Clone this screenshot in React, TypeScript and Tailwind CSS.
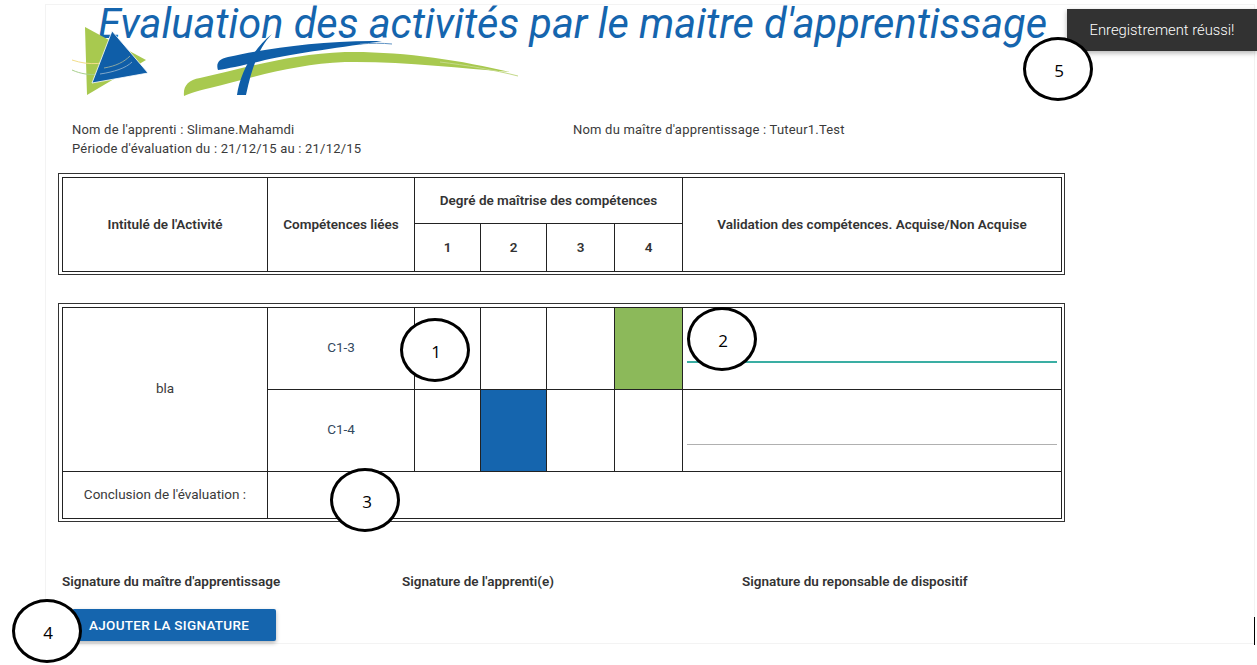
import React from "react";

const Bubble: React.FC<{ n: number; className: string }> = ({ n, className }) => (
  <div
    className={
      "absolute w-[70px] h-[64px] pt-[4px] pl-[2px] rounded-[50%] border-[3px] border-black bg-white flex items-center justify-center text-[17px] text-black font-['Open_Sans',sans-serif] " +
      className
    }
  >
    {n}
  </div>
);

const Logo = () => (
  <svg width="460" height="80" viewBox="0 0 460 80" className="block">
    {/* triangles */}
    <polygon points="25,7 86,40 27,75" fill="#a8c94f" />
    <path d="M12 40 C30 46 45 44 60 38" stroke="#f2de8a" strokeWidth="1" fill="none" />
    <path d="M12 50 C30 58 45 54 62 48" stroke="#a8d08d" strokeWidth="1" fill="none" />
    <polygon points="52,11 88,53 32,63" fill="#0f5ea8" stroke="#ffffff" strokeWidth="0.8" />
    <path d="M44 48 C56 46 64 42 70 36" stroke="#8aa6a0" strokeWidth="1" fill="none" />
    <path d="M40 54 C54 52 66 48 72 42" stroke="#7fa7c9" strokeWidth="1" fill="none" />
    {/* green brush stroke */}
    <path
      d="M124 76 C123 66 128 60 140 58 C185 48 230 34 285 32 C340 31 400 40 450 52 C400 48 340 41 285 42 C235 44 190 58 150 68 C138 71 130 73 124 76 Z"
      fill="#a8c94f"
    />
    <path d="M380 42 C405 45 435 50 458 56" stroke="#c4d98a" strokeWidth="1" fill="none" />
    {/* blue brush strokes */}
    <path
      d="M158 50 C156 44 158 39 168 37 C205 29 260 20 322 21 C285 27 235 33 205 40 C185 45 170 48 158 50 Z"
      fill="#0f5ea8"
    />
    <path d="M300 24 C312 23 322 23 332 24" stroke="#5f93c4" strokeWidth="1" fill="none" />
    <path d="M212 14 C200 26 192 46 186 75 L177 75 C180 54 192 30 212 14 Z" fill="#0f5ea8" />
  </svg>
);

const Cell: React.FC<{ className?: string; children?: React.ReactNode; rowSpan?: number; colSpan?: number }> = ({
  className = "",
  children,
  rowSpan,
  colSpan,
}) => (
  <td rowSpan={rowSpan} colSpan={colSpan} className={"border border-[#222] p-0 text-center align-middle " + className}>
    {children}
  </td>
);

const Cols = () => (
  <colgroup>
    <col className="w-[205px]" />
    <col className="w-[147px]" />
    <col className="w-[66px]" />
    <col className="w-[66px]" />
    <col className="w-[68px]" />
    <col className="w-[68px]" />
    <col />
  </colgroup>
);

export default function App() {
  return (
    <div className="relative w-full h-[665px] overflow-hidden bg-white font-['Roboto',sans-serif] text-[13px] text-[#3a3a3a]">
      <div className="ml-[45px] mr-[2px] mt-[4px] h-[640px] border border-[#f3f3f3]">
        <div className="h-[93px] relative">
          <h1 className="pl-[52px] text-[41.5px] leading-[38px] font-normal italic text-[#1565ae] whitespace-nowrap">
            Evaluation des activités par le maitre d'apprentissage
          </h1>
          <div className="-mt-[23px] ml-[14px]">
            <Logo />
          </div>
        </div>

        <div className="mt-[22px] pl-[26px] leading-[19px] tracking-[0.2px]">
          <div className="flex">
            <span className="w-[501px]">Nom de l'apprenti : Slimane.Mahamdi</span>
            <span>Nom du maître d'apprentissage : Tuteur1.Test</span>
          </div>
          <div>Période d'évaluation du : 21/12/15 au : 21/12/15</div>
        </div>

        <div className="mt-[15px] ml-[12px] w-[1007px] border border-[#333] pt-[3px] pl-[3px] pr-[2px] pb-[2px]">
          <table className="w-full table-fixed border-collapse font-semibold text-[13.5px] text-[#333]">
            <Cols />
            <tbody>
              <tr className="h-[46px]">
                <Cell rowSpan={2} className="pb-[1px]">Intitulé de l'Activité</Cell>
                <Cell rowSpan={2} className="pb-[1px]">Compétences liées</Cell>
                <Cell colSpan={4}>Degré de maîtrise des compétences</Cell>
                <Cell rowSpan={2} className="pb-[1px]">Validation des compétences. Acquise/Non Acquise</Cell>
              </tr>
              <tr className="h-[48px]">
                <Cell>1</Cell>
                <Cell>2</Cell>
                <Cell>3</Cell>
                <Cell>4</Cell>
              </tr>
            </tbody>
          </table>
        </div>

        <div className="mt-[28px] ml-[12px] w-[1007px] border border-[#333] pt-[3px] pl-[3px] pr-[2px] pb-[2px]">
          <table className="w-full table-fixed border-collapse text-[13.5px]">
            <Cols />
            <tbody>
              <tr className="h-[82px]">
                <Cell rowSpan={2} className="pb-[2px]">bla</Cell>
                <Cell className="pb-[2px] text-[#34495e]">C1-3</Cell>
                <Cell />
                <Cell />
                <Cell />
                <Cell className="bg-[#8cb95a]" />
                <Cell className="px-[4px]">
                  <div className="mt-[27px] h-[2px] bg-[#3aaea3]" />
                </Cell>
              </tr>
              <tr className="h-[82px]">
                <Cell className="pb-[2px] text-[#34495e]">C1-4</Cell>
                <Cell />
                <Cell className="bg-[#1565ae]" />
                <Cell />
                <Cell />
                <Cell className="px-[4px]">
                  <div className="mt-[27px] h-px bg-[#b0b0b0]" />
                </Cell>
              </tr>
              <tr className="h-[47px]">
                <Cell className="pb-[1px]">Conclusion de l'évaluation :</Cell>
                <Cell colSpan={5} className="border-r-0" />
                <Cell className="border-l-0" />
              </tr>
            </tbody>
          </table>
        </div>

        <div className="mt-[49px] ml-[16px] flex font-semibold text-[13.5px] text-[#333]">
          <span className="w-[340px]">Signature du maître d'apprentissage</span>
          <span className="w-[340px]">Signature de l'apprenti(e)</span>
          <span>Signature du reponsable de dispositif</span>
        </div>

        <button className="mt-[18px] ml-[26px] w-[204px] h-[32px] pl-[17px] text-left rounded-[2px] bg-[#1565ae] text-white text-[13.5px] font-medium uppercase tracking-[0.3px] shadow-[0_2px_4px_rgba(0,0,0,0.3)]">
          Ajouter la signature
        </button>
      </div>

      <div className="absolute left-[1067px] right-0 top-[9px] h-[42px] flex items-center justify-center bg-[#323232] text-[14.8px] font-light text-white shadow-[0_2px_5px_rgba(0,0,0,0.3)]">
        Enregistrement réussi!
      </div>
      <div className="absolute left-[1254px] top-[617px] w-px h-[28px] bg-black" />

      <Bubble n={1} className="left-[400px] top-[318px]" />
      <Bubble n={2} className="left-[687px] top-[307px]" />
      <Bubble n={3} className="left-[330px] top-[468px] pl-[4px]" />
      <Bubble n={4} className="left-[12px] top-[599px]" />
      <Bubble n={5} className="left-[1023px] top-[37px]" />
    </div>
  );
}
